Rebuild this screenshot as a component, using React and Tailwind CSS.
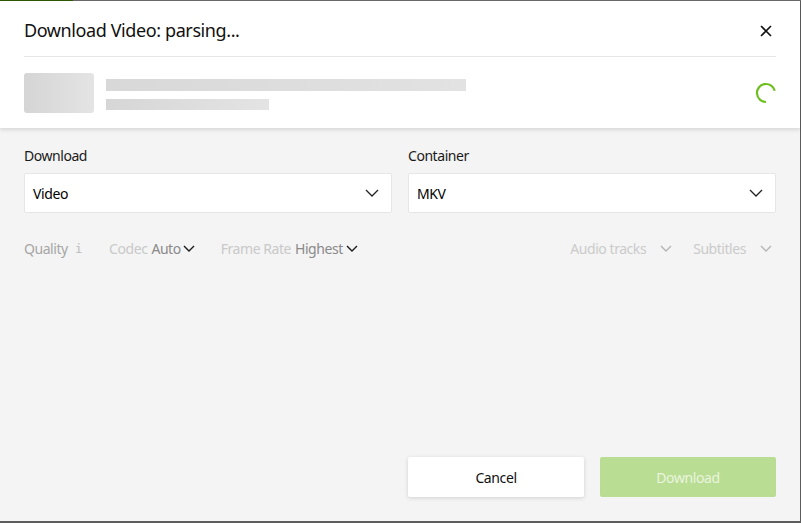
import React from 'react';

function Chevron({ className = '' }) {
    return (
        <svg width="14" height="8" viewBox="0 0 14 8" className={className} fill="none" stroke="currentColor" strokeWidth="1.3">
            <path d="M1 1l6 6 6-6" />
        </svg>
    );
}

function SmallChevron({ className = '' }) {
    return (
        <svg width="12" height="7" viewBox="0 0 12 7" className={className} fill="none" stroke="currentColor" strokeWidth="1.4">
            <path d="M1 1l5 5 5-5" />
        </svg>
    );
}

function Select({ label, value }) {
    return (
        <div className="flex-1">
            <div className="text-[14px] leading-5 text-[#1a1a1a] tracking-[-0.45px]">{label}</div>
            <div className="mt-[7px] h-10 bg-white border border-[#e6e6e6] rounded-[2px] flex items-center justify-between pl-2 pr-[11px]">
                <span className="text-[14px] text-black tracking-[-0.4px]">{value}</span>
                <Chevron className="text-[#222] mr-[1px]" />
            </div>
        </div>
    );
}

export default function App() {
    return (
        <div className="w-[801px] h-[523px] bg-[#5c5c5c] overflow-hidden" style={{ fontFamily: '"Noto Sans", "Open Sans", sans-serif' }}>
            <div className="flex h-px">
                <div className="w-[73px] bg-[#2c5a00]" />
                <div className="flex-1 bg-[#6a6a6a]" />
            </div>
            <div className="w-[800px] h-[520px] bg-[#f4f4f4] flex flex-col">
                <div className="bg-white px-6 relative z-10 shadow-[0_2px_4px_rgba(0,0,0,0.12)]">
                    <div className="h-[55px] flex items-center justify-between">
                        <h1 className="text-[18px] text-[#111] pt-[4px] tracking-[-0.4px]">Download Video: parsing...</h1>
                        <svg width="12" height="12" viewBox="0 0 12 12" className="mr-[4px] mt-[4px]" stroke="#111" strokeWidth="1.6">
                            <path d="M1 1l10 10M11 1L1 11" />
                        </svg>
                    </div>
                    <div className="h-px bg-[#e6e6e6]" />
                    <div className="h-[71px] flex items-center">
                        <div className="w-[70px] h-10 rounded-[3px] bg-gradient-to-r from-[#d5d5d5] to-[#e4e4e4]" />
                        <div className="ml-3 flex-1 flex flex-col gap-[8px] mt-[3px]">
                            <div className="w-[360px] h-3 bg-gradient-to-r from-[#d8d8d8] to-[#e2e2e2]" />
                            <div className="w-[163px] h-[11px] bg-gradient-to-r from-[#d6d6d6] to-[#e4e4e4]" />
                        </div>
                        <svg width="22" height="22" viewBox="0 0 22 22" className="-mr-[1px] mt-[1px]">
                            <path d="M11 20 A9 9 0 1 1 19.7 8.7" fill="none" stroke="#6cbf1d" strokeWidth="2.2" />
                        </svg>
                    </div>
                </div>
                <div className="flex-1 px-6 pt-[18px] flex flex-col">
                    <div className="flex gap-4">
                        <Select label="Download" value="Video" />
                        <Select label="Container" value="MKV" />
                    </div>
                    <div className="mt-[25px] flex items-center justify-between text-[14px] tracking-[-0.45px]">
                        <div className="flex items-center">
                            <span className="text-[#a6a6a6]">Quality</span>
                            <span className="ml-[7px] text-[#bdbdbd] text-[13px]" style={{ fontFamily: '"DejaVu Sans Mono", monospace' }}>i</span>
                            <span className="ml-[27px] text-[#c9c9c9]">Codec</span>
                            <span className="ml-1 text-[#8a8a8a]">Auto</span>
                            <SmallChevron className="ml-[2px] text-[#1a1a1a]" />
                            <span className="ml-[26px] text-[#c9c9c9]">Frame Rate</span>
                            <span className="ml-1 text-[#8a8a8a]">Highest</span>
                            <SmallChevron className="ml-[3px] text-[#1a1a1a]" />
                        </div>
                        <div className="flex items-center">
                            <span className="text-[#cbcbcb]">Audio tracks</span>
                            <SmallChevron className="ml-[14px] text-[#b5b5b5]" />
                            <span className="ml-[21px] text-[#cbcbcb]">Subtitles</span>
                            <SmallChevron className="ml-[14px] mr-[4px] text-[#b5b5b5]" />
                        </div>
                    </div>
                    <div className="mt-auto mb-6 flex justify-end gap-4">
                        <button className="w-[176px] h-10 bg-white rounded-[2px] shadow-[0_1px_4px_rgba(0,0,0,0.15)] text-[14px] text-[#111] tracking-[-0.4px]">Cancel</button>
                        <button className="w-[176px] h-10 bg-[#badd94] rounded-[2px] text-[14px] text-[#e9f5de] tracking-[-0.4px]">Download</button>
                    </div>
                </div>
            </div>
        </div>
    );
}
